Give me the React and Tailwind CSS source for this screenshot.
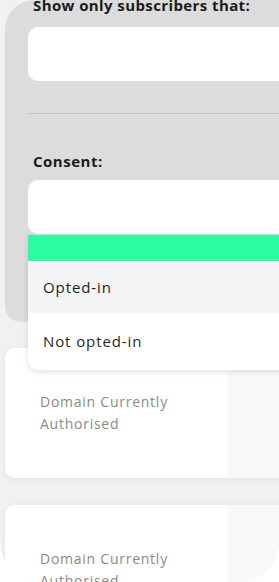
import React from "react";

export default function App() {
  const font = { fontFamily: "'Open Sans', 'Liberation Sans', sans-serif" };
  return (
    <div className="w-[279px] h-[582px] bg-white overflow-hidden" style={font}>
      <div className="relative h-[582px] bg-[#f1f1f1] rounded-b-[40px] overflow-hidden">
        {/* filter panel */}
        <div className="ml-[5px] w-[320px] h-[322px] bg-[#dcdcdc] rounded-tl-[30px] rounded-bl-[16px] pl-[23px] flex flex-col">
          <div className="-mt-[4px] pl-[5px] text-[15px] leading-[18px] font-bold tracking-[0.4px] text-[#1b1b1b] whitespace-nowrap">
            Show only subscribers that:
          </div>
          <div className="mt-[13px] h-[54px] w-[300px] shrink-0 bg-white rounded-[10px]" />
          <div className="mt-[32px] h-px w-[300px] shrink-0 bg-[#c6c6c6]" />
          <div className="mt-[38px] pl-[5px] text-[15px] leading-[18px] font-bold tracking-[0.5px] text-[#1b1b1b]">
            Consent:
          </div>
          <div className="relative mt-[10px] w-[300px]">
            <div className="h-[54px] bg-white rounded-[10px]" />
            <div className="absolute left-0 top-[55px] w-[300px] z-10 rounded-bl-[10px] overflow-hidden shadow-[0_2px_6px_rgba(0,0,0,0.12)]">
              <div className="h-[26px] bg-[#2afea0]" />
              <div className="h-[52px] bg-[#f4f4f4] flex items-center pl-[15px] text-[15px] font-medium tracking-[0.9px] text-[#1e1e1e]">
                Opted-in
              </div>
              <div className="h-[57px] bg-white flex items-center pl-[15px] text-[15px] tracking-[0.9px] text-[#2a2a2a]">
                Not opted-in
              </div>
            </div>
          </div>
        </div>

        {/* cards */}
        <div className="mt-[26px] flex flex-col gap-[27px] pl-[5px]">
          {[0, 1].map((i) => (
            <div
              key={i}
              className="flex h-[130px] w-[300px] shrink-0 rounded-l-[10px] overflow-hidden shadow-[0_1px_6px_rgba(0,0,0,0.06)]"
            >
              <div className="w-[223px] bg-white pl-[35px] pt-[43px] text-[14px] leading-[22px] tracking-[0.75px] text-[#8a8a8a]">
                Domain Currently
                <br />
                Authorised
              </div>
              <div className="flex-1 bg-[#f9f9f9]" />
            </div>
          ))}
        </div>
      </div>
    </div>
  );
}
